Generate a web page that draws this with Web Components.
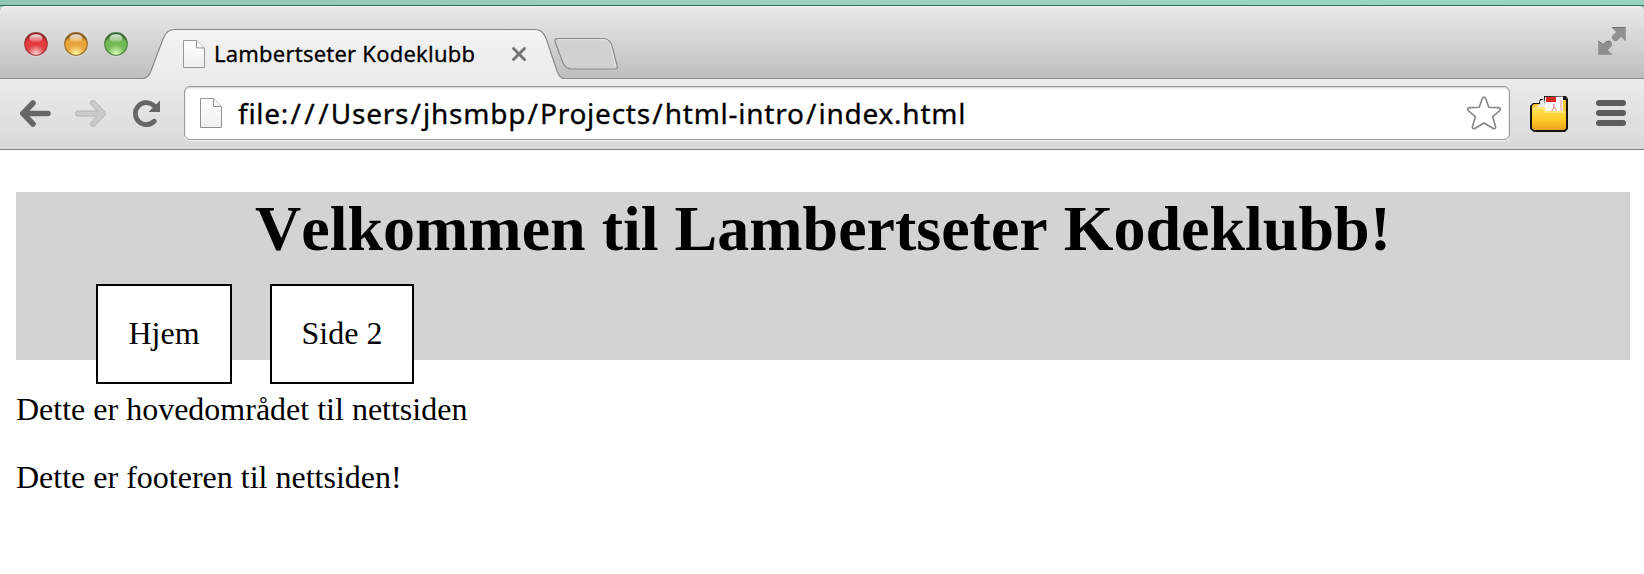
<!DOCTYPE html>
<html lang="no"><head><meta charset="utf-8"><title>Lambertseter Kodeklubb</title>
<style>
body{margin:0;background:#fff;color:#000;font-family:"Liberation Serif",serif;font-size:32px;overflow:hidden}
</style></head><body>
<browser-window>
  <browser-tab slot="tabs">Lambertseter Kodeklubb</browser-tab>
  <address-bar slot="address" url="file:///Users/jhsmbp/Projects/html-intro/index.html"></address-bar>
  <club-page></club-page>
</browser-window>
<script>
const define=(name,html)=>customElements.define(name,class extends HTMLElement{
  constructor(){super();this.attachShadow({mode:'open'}).innerHTML=html;}
});

define('traffic-lights',`<style>:host{display:flex;gap:16px}svg{display:block;width:24px;height:25px}</style>
${[['r','#8e2020','#e23b3d','#ffd9dc'],['y','#8a5310','#e9a338','#fff7a8'],['g','#2f6a26','#72b955','#e2ffc0']].map(c=>`
<svg viewBox="0 0 24 25"><defs>
<radialGradient id="${c[0]}" cx=".5" cy=".95" r=".85"><stop offset="0" stop-color="${c[3]}"/><stop offset=".5" stop-color="${c[2]}"/><stop offset=".8" stop-color="${c[2]}"/><stop offset="1" stop-color="${c[1]}"/></radialGradient>
<linearGradient id="h${c[0]}" x2="0" y2="1"><stop offset="0" stop-color="#fff" stop-opacity=".9"/><stop offset="1" stop-color="#fff" stop-opacity=".1"/></linearGradient></defs>
<circle cx="12" cy="13" r="11.6" fill="#fff" opacity=".45"/><circle cx="12" cy="12" r="11.3" fill="url(#${c[0]})" stroke="${c[1]}" stroke-width="1.2" stroke-opacity=".75"/>
<ellipse cx="12" cy="6.2" rx="6.6" ry="4" fill="url(#h${c[0]})"/></svg>`).join('')}`);

define('page-icon',`<style>:host{display:block}svg{display:block;width:100%;height:100%}</style>
<svg viewBox="0 0 22 30" preserveAspectRatio="none"><defs><linearGradient id="p" x2="0" y2="1"><stop stop-color="#fff"/><stop offset="1" stop-color="#efefef"/></linearGradient></defs>
<path d="M.5.5H13.5L21.500 8.500V29.500H.5Z" fill="url(#p)" stroke="#929292"/><path d="M13.500.5V8.500H21.500" fill="#f5f5f5" stroke="#929292"/></svg>`);

define('browser-tab',`<style>
:host{display:grid;width:422px;height:52px;font:22px/30px "Noto Sans","Open Sans",sans-serif}
svg.shape,.row{grid-area:1/1}
.shape{width:422px;height:52px;display:block}
.row{display:flex;align-items:flex-start;padding-left:41px}
page-icon{width:22px;height:28px;margin-top:12px}
.title{width:270px;margin:10px 0 0 9px;white-space:nowrap;letter-spacing:.22px;-webkit-text-stroke:.3px #000}
.close{width:16px;height:16px;margin:18px 0 0 27px}
</style>
<svg class="shape" viewBox="0 0 422 52"><defs><linearGradient id="t" x2="0" y2="1"><stop stop-color="#f3f3f3"/><stop offset="1" stop-color="#ebebeb"/></linearGradient></defs>
<path d="M0 52V50.500C5 50.500 7 48 9 43L21 11C24 4 27 1.500 33 1.500H393C399 1.500 401 4 404 10L415 43C417 48 419 50.500 422 50.500V52Z" fill="url(#t)"/>
<path d="M0 50.500C5 50.500 7 48 9 43L21 11C24 4 27 1.500 33 1.500H393C399 1.500 401 4 404 10L415 43C417 48 419 50.500 422 50.500" fill="none" stroke="#888" stroke-width="1.200"/></svg>
<div class="row"><page-icon></page-icon><span class="title"><slot></slot></span>
<svg class="close" viewBox="0 0 16 16"><path d="M2.500 2.500L13.500 13.500M13.500 2.500L2.500 13.500" stroke="#747474" stroke-width="2.900" stroke-linecap="round"/></svg></div>`);

define('tab-strip',`<style>
:host{display:flex;align-items:flex-start;height:73px;box-sizing:border-box;background:linear-gradient(#e9e9e9,#d4d4d4 50%,#bdbdbd);box-shadow:inset 0 1px #f5f5f5,inset 0 -1px #8c8c8c;padding-left:24px}
traffic-lights{margin-top:26px}.tabs{margin:22px 0 0 14px;height:52px}
.new{width:64px;height:33px;margin:31px 0 0 -10px}.full{width:28px;height:28px;margin:21px 18px 0 auto}
</style><traffic-lights></traffic-lights><div class="tabs"><slot></slot></div>
<svg class="new" viewBox="0 0 64 33"><path d="M4 1.500H48C53 1.500 55.500 3 57.500 7L63 28C64 31 63 32 60 32H18C13 32 11 30 9 26L1.500 6C.5 3 1 1.500 4 1.500Z" fill="#d1d1d1" stroke="#8b8b8b" stroke-width="1.200"/><path d="M4 2.700H48C52 2.700 54.500 4 56.500 8L61.500 29" fill="none" stroke="#eee" opacity=".7"/></svg>
<svg class="full" viewBox="0 0 28 28"><g fill="#8f8f8f" stroke="#8f8f8f"><path d="M14 .5H27.500V14Z" stroke-width=".6"/><path d="M14 27.500" /><path d="M21.500 6.500L17.500 10.500" stroke-width="7" stroke-linecap="round"/><path d="M.5 14V27.500H14Z" stroke-width=".6"/><path d="M6.500 21.500L10.500 17.500" stroke-width="7" stroke-linecap="round"/></g><path d="M14 .5H27.500M.5 14L5 17.500L8 14.800Q11 13 13.300 15.500" fill="none" stroke="#727272"/></svg>`);

customElements.define('address-bar',class extends HTMLElement{
  constructor(){
    super();
    this.attachShadow({mode:'open'}).innerHTML=`<style>
:host{display:flex;align-items:center;box-sizing:border-box;height:54px;background:#fff;border:1px solid #999;border-radius:6px;box-shadow:inset 0 1px 2px #ccc,0 1px #f5f5f5;padding:0 7px 0 15px;font:28px/40px "Noto Sans","Open Sans",sans-serif}
page-icon{width:22px;height:30px}.url{flex:1;margin:-1px 0 0 16px;letter-spacing:.75px;white-space:nowrap;-webkit-text-stroke:.3px #000}
.url i{font-style:normal;letter-spacing:2.1px;margin-left:1.35px}
.star{width:36px;height:36px}
</style><page-icon></page-icon><span class="url"></span>
<svg class="star" viewBox="0 0 36 36"><path d="M16.200 3.800Q18 .2 19.800 3.800L22.800 12.200L32.500 12.600Q36 13.200 33.300 16L26.500 21.800L29.500 31Q30.200 34.800 26.800 33.200L18 28L9.200 33.200Q5.800 34.800 6.500 31L9.500 21.800L2.700 16Q0 13.200 3.500 12.600L13.200 12.200Z" fill="#fff" stroke="#858585" stroke-width="1.600" stroke-linejoin="round"/></svg>`;
  }
  connectedCallback(){
    this.shadowRoot.querySelector('.url').innerHTML=this.getAttribute('url').replace(/\//g,'<i>/</i>');
  }
});

define('browser-toolbar',`<style>
:host{display:flex;align-items:flex-start;box-sizing:border-box;height:71px;background:linear-gradient(#ebebeb,#d9d9d9);border-bottom:1px solid #808080;padding-left:20px}
svg{display:block;flex:none;margin-top:21px}.box{flex:1;margin:7px 0 0 23px}
.fwd{margin-left:24px}.reload{margin-left:27px}.folder{margin:16px 0 0 19px}.menu{margin:20px 18px 0 27px}
</style>
<svg width="31" height="27" viewBox="0 0 31 27"><path d="M13 3L3 13.500L13 24M4 13.500H28" fill="none" stroke="#666" stroke-width="5.600" stroke-linecap="round" stroke-linejoin="miter"/></svg>
<svg class="fwd" width="31" height="27" viewBox="0 0 31 27"><path d="M18 3L28 13.500L18 24M27 13.500H3" fill="none" stroke="#b4b4b4" stroke-width="5.800" stroke-linecap="round"/><path d="M18 3L28 13.500L18 24M27 13.500H3" fill="none" stroke="#cbcbcb" stroke-width="4.200" stroke-linecap="round"/></svg>
<svg class="reload" width="28" height="28" viewBox="0 0 28 28"><path d="M21.200 21.300A11 11 0 1 1 20 4.800L22 6.500" fill="none" stroke="#666" stroke-width="4.800" stroke-linecap="round"/><path d="M27 .5V12H15.500Z" fill="#666"/></svg>
<div class="box"><slot></slot></div>
<svg class="folder" width="40" height="38" viewBox="0 0 40 38"><defs><linearGradient id="f" x2="0" y2="1"><stop stop-color="#ffe45b"/><stop offset=".55" stop-color="#ffc928"/><stop offset="1" stop-color="#e9a51b"/></linearGradient></defs>
<path d="M1 11L4 8H10L11 4H15V1H37L39 4V34L36 37H5L1 34Z" fill="#17120a"/>
<path d="M3 11L5 9H11L14 13H34V5H37V33H3Z" fill="#f7c632"/>
<path d="M8 11L11 9V6L15 4L17 18H11Z" fill="#e8e8e8"/><path d="M16 2L34 1.500V17H15Z" fill="#f7f7f7"/><path d="M17 2H27V7H17Z" fill="#d92925"/><path d="M25 9C25 13 24 15 22 17M25 11L28 17M32 5V16" fill="none" stroke="#eba0a0" stroke-width="1.200"/>
<path d="M3 15Q3 12 6 12H14Q16 12 17 16H34Q37 16 37 19V32Q37 35 34 35H6Q3 35 3 32Z" fill="url(#f)"/><path d="M4 15Q4 13 7 13H13Q15 13 16 17H36" fill="none" stroke="#fff19a"/></svg>
<svg class="menu" width="30" height="28" viewBox="0 0 30 28"><g fill="#5c5c5c"><rect y="1" width="30" height="6" rx="3"/><rect y="11" width="30" height="6" rx="3"/><rect y="21" width="30" height="6" rx="3"/></g></svg>`);

define('nav-item',`<style>:host{display:block;box-sizing:border-box;height:100px;border:2px solid #000;background:#fff;padding-top:29px;text-align:center;line-height:36px;white-space:nowrap}</style><slot></slot>`);

define('club-page',`<style>
:host{display:block;padding:42px 14px 0 16px}
header{height:168px;background:#d3d3d3}
h1{margin:0;font-size:64px;line-height:73px;height:92px;text-align:center;font-weight:bold;font-kerning:none;white-space:nowrap}
nav{display:flex;gap:38px;padding-left:80px}.home{width:136px}.two{width:144px}
p{margin:0;line-height:36px}.main{margin-top:31px}.foot{margin-top:32px}
</style><header><h1>Velkommen til Lambertseter Kodeklubb!</h1><nav><nav-item class="home">Hjem</nav-item><nav-item class="two">Side 2</nav-item></nav></header>
<p class="main">Dette er hovedområdet til nettsiden</p><p class="foot">Dette er footeren til nettsiden!</p>`);

define('browser-window',`<style>:host{display:block;height:574px}
.desktop{height:5px;background:linear-gradient(90deg,#8fc8b3,#98d0be 40%,#9bd6c1 80%,#97d3bd);border-bottom:1px solid #356b5a}
.frame{background:#a9cfc2}tab-strip{border-radius:6px 6px 0 0}
</style><div class="desktop"></div><div class="frame"><tab-strip><slot name="tabs"></slot></tab-strip><browser-toolbar><slot name="address"></slot></browser-toolbar></div><slot></slot>`);
</script></body></html>
